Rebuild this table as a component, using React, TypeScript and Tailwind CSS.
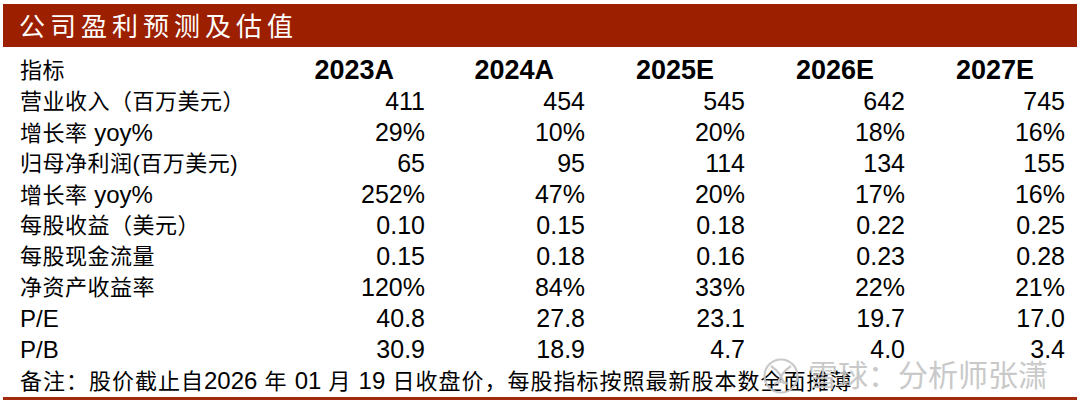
import React from 'react'

const cols = ['2023A', '2024A', '2025E', '2026E', '2027E']

const rows: { label: string; values: string[] }[] = [
  { label: '营业收入（百万美元）', values: ['411', '454', '545', '642', '745'] },
  { label: '增长率 yoy%', values: ['29%', '10%', '20%', '18%', '16%'] },
  { label: '归母净利润(百万美元)', values: ['65', '95', '114', '134', '155'] },
  { label: '增长率 yoy%', values: ['252%', '47%', '20%', '17%', '16%'] },
  { label: '每股收益（美元）', values: ['0.10', '0.15', '0.18', '0.22', '0.25'] },
  { label: '每股现金流量', values: ['0.15', '0.18', '0.16', '0.23', '0.28'] },
  { label: '净资产收益率', values: ['120%', '84%', '33%', '22%', '21%'] },
  { label: 'P/E', values: ['40.8', '27.8', '23.1', '19.7', '17.0'] },
  { label: 'P/B', values: ['30.9', '18.9', '4.7', '4.0', '3.4'] },
]

// latin bits (yoy%, P/E, dates) sit a touch bigger than the CJK text
function Mixed({ text }: { text: string }) {
  const parts = text.split(/([A-Za-z0-9%\/]+)/)
  return (
    <>
      {parts.map((p, i) =>
        /^[A-Za-z0-9%\/]+$/.test(p) ? (
          <span key={i} className="text-[24px] tracking-normal">
            {p}
          </span>
        ) : (
          <span key={i}>{p}</span>
        )
      )}
    </>
  )
}

function SnowballLogo() {
  return (
    <svg width="38" height="38" viewBox="0 0 38 38" fill="none" stroke="#c4c4c4" strokeWidth="2.2">
      <circle cx="19" cy="19" r="16.5" />
      <path d="M9 9c6 4 11 10 13 18" />
      <path d="M29 9c-6 4-11 10-13 18" />
      <path d="M12 27c4-3 10-3 14 0" />
    </svg>
  )
}

export default function App() {
  return (
    <div
      className="relative w-[1080px] h-[405px] overflow-hidden bg-white px-[3px] pt-[4px] text-black"
      style={{ fontFamily: '"Liberation Sans", "Noto Sans CJK SC", sans-serif' }}
    >
      {/* Title bar */}
      <div className="h-[43px] bg-[#9c2000] flex items-center pl-[16px] pt-[4px] text-white text-[26px] tracking-[5px]">
        公司盈利预测及估值
      </div>

      {/* Table */}
      <div className="mt-[8px] pl-[17px] grid grid-cols-[245px_repeat(5,160px)]">
        <div className="h-[31px] leading-[31px] text-[22px] tracking-[0.5px]">指标</div>
        {cols.map((c) => (
          <div key={c} className="h-[31px] leading-[31px] text-right pr-[31px] text-[27px] font-bold">
            {c}
          </div>
        ))}

        {rows.map((r, i) => (
          <React.Fragment key={i}>
            <div className="h-[31px] leading-[31px] text-[22px] tracking-[0.5px] whitespace-nowrap">
              <Mixed text={r.label} />
            </div>
            {r.values.map((v, j) => (
              <div key={j} className="h-[31px] leading-[31px] text-right text-[25px]">
                {v}
              </div>
            ))}
          </React.Fragment>
        ))}
      </div>

      {/* Note */}
      <div className="h-[31px] leading-[31px] pl-[17px] text-[22px] tracking-[1px] whitespace-nowrap">
        <Mixed text="备注：股价截止自2026 年 01 月 19 日收盘价，每股指标按照最新股本数全面摊薄" />
      </div>
      <div className="mt-[1px] h-[3px] bg-[#a12b0c]" />

      {/* Watermark */}
      <div className="absolute left-[762px] top-[357px] flex items-center gap-[8px] text-[#c4c4c4] text-[30px] leading-none opacity-90">
        <SnowballLogo />
        <span>雪球：分析师张潇</span>
      </div>
    </div>
  )
}
